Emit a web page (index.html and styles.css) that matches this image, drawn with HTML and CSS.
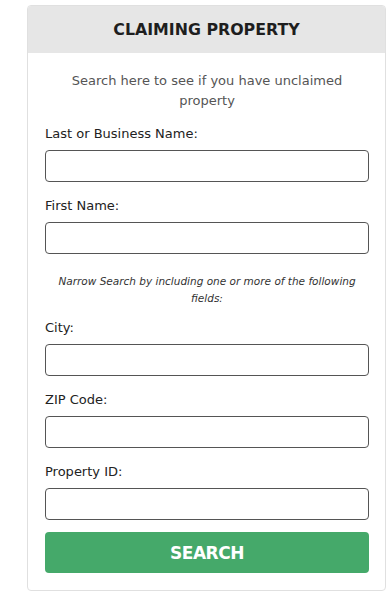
FILE: index.html
```html
<!DOCTYPE html>
<html lang="en">
<head>
<meta charset="utf-8">
<title>Claiming Property</title>
<link rel="stylesheet" href="styles.css">
</head>
<body>
<div class="card">
  <div class="card-header">
    <h2 class="card-title">CLAIMING PROPERTY</h2>
  </div>
  <form class="card-body">
    <p class="intro">Search here to see if you have unclaimed property</p>
    <div class="field">
      <label class="field-label" for="last">Last or Business Name:</label>
      <input class="field-input" id="last" type="text">
    </div>
    <div class="field">
      <label class="field-label" for="first">First Name:</label>
      <input class="field-input" id="first" type="text">
    </div>
    <p class="narrow">Narrow Search by including one or more of the following fields:</p>
    <div class="field">
      <label class="field-label" for="city">City:</label>
      <input class="field-input" id="city" type="text">
    </div>
    <div class="field">
      <label class="field-label" for="zip">ZIP Code:</label>
      <input class="field-input" id="zip" type="text">
    </div>
    <div class="field">
      <label class="field-label" for="pid">Property ID:</label>
      <input class="field-input" id="pid" type="text">
    </div>
    <button class="search-btn" type="button">SEARCH</button>
  </form>
</div>
</body>
</html>
```
FILE: styles.css
```css
* { box-sizing: border-box; }

body {
  margin: 0;
  background: #ffffff;
  font-family: "DejaVu Sans", "Open Sans", sans-serif;
  color: #222;
}

.card {
  margin: 5px 4px 0 27px;
  width: 359px;
  border: 1px solid #e0e0e0;
  border-radius: 4px;
  overflow: hidden;
}

.card-header {
  height: 47px;
  background: #e6e6e6;
  display: flex;
  align-items: center;
  justify-content: center;
}

.card-title {
  margin: 0;
  font-size: 15.8px;
  font-weight: 700;
  color: #1e1e1e;
}

.card-body {
  display: flex;
  flex-direction: column;
  padding: 18px 16px 17px 17px;
}

.intro {
  margin: 0 0 14px;
  text-align: center;
  font-size: 13px;
  line-height: 20px;
  color: #555;
  padding: 0 16px;
}

.field {
  display: flex;
  flex-direction: column;
  margin-bottom: 15px;
}

.field-label {
  font-size: 13px;
  line-height: 18px;
  color: #222;
  margin-bottom: 7px;
}

.field-input {
  height: 32px;
  width: 100%;
  border: 1px solid #555;
  border-radius: 4px;
  background: #fff;
  font: inherit;
}

.narrow {
  margin: 4px 0 12px;
  text-align: center;
  font-style: italic;
  font-size: 10.5px;
  line-height: 17px;
  color: #333;
  padding: 0 10px;
}

.search-btn {
  margin-top: -3px;
  height: 41px;
  border: none;
  border-radius: 4px;
  background: #45a96a;
  color: #fff;
  font-family: inherit;
  font-size: 17px;
  font-weight: 700;
  letter-spacing: -0.5px;
}
```
